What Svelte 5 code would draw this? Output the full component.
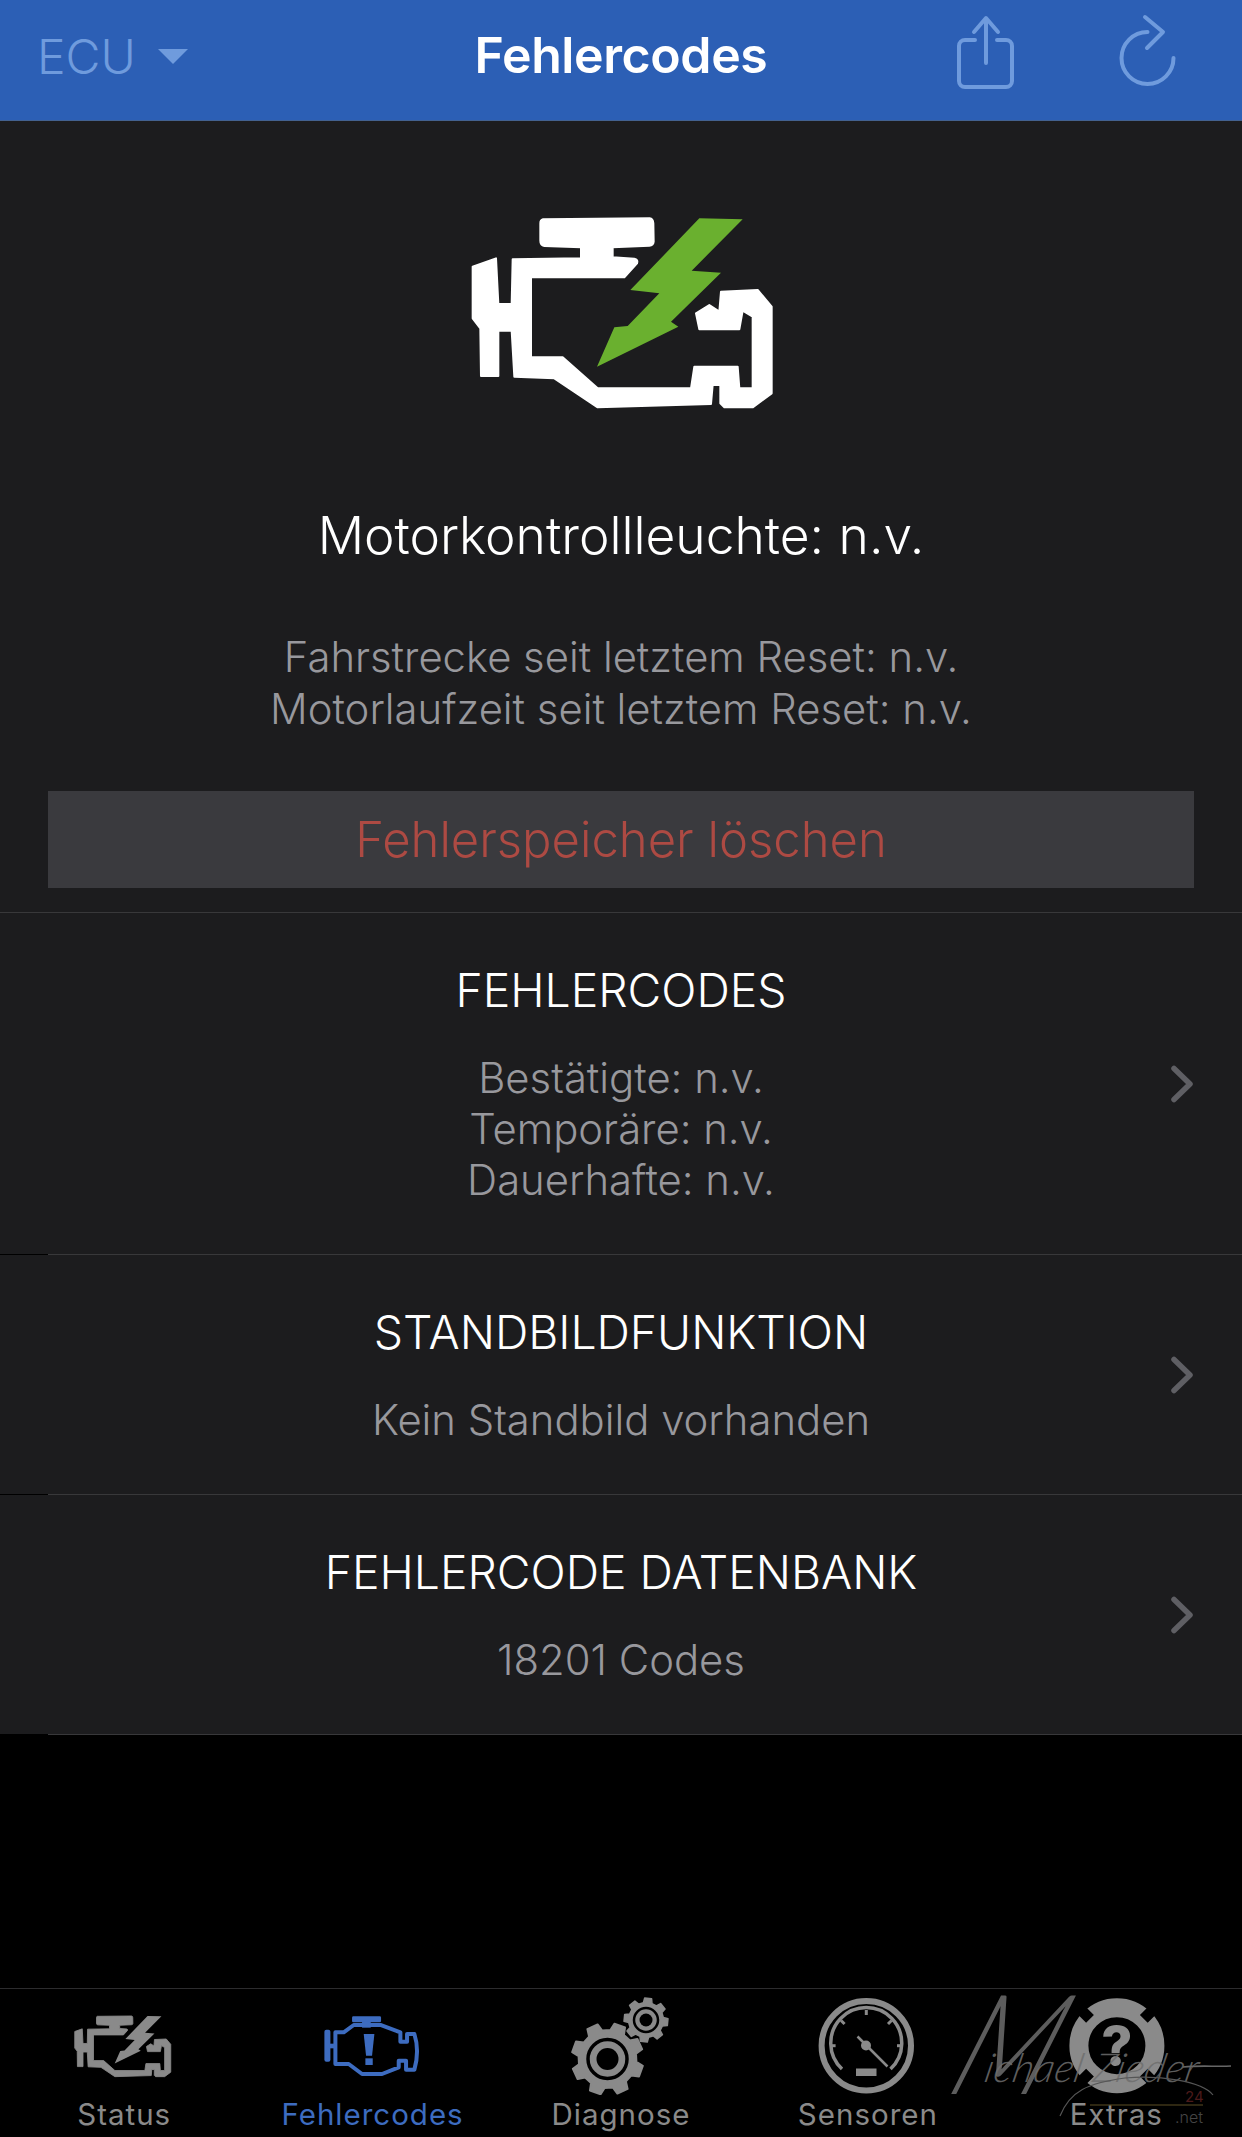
<script>
  const gray = '#8a8a8a'

  const rows = [
    { title: 'FEHLERCODES', lines: ['Bestätigte: n.v.', 'Temporäre: n.v.', 'Dauerhafte: n.v.'] },
    { title: 'STANDBILDFUNKTION', lines: ['Kein Standbild vorhanden'] },
    { title: 'FEHLERCODE DATENBANK', lines: ['18201 Codes'] }
  ]

  const ENGINE =
    'M306 58 L626 55 Q636 56 637 70 L638 125 Q637 136 625 137 L515 142 L515 172 L580 176 Q592 178 588 190 L550 232 L270 232 L270 472 L365 472 L470 565 L750 565 L760 500 L890 500 L895 565 L935 565 L935 350 L905 332 L895 388 L775 388 L765 340 L805 315 L835 335 L840 275 L950 270 L992 320 L992 580 L935 622 L850 622 L838 610 L838 555 L815 555 L810 612 L470 622 L340 535 L220 530 L212 392 L172 392 L172 528 L120 528 L118 385 L95 355 L95 200 L165 175 L172 312 L212 312 L215 178 L420 175 L420 142 L310 138 Q298 136 298 122 L298 70 Q298 60 306 58 Z'
  const BOLT =
    'M775 55 L905 58 L752 212 L840 218 L690 365 L712 380 L468 500 L520 382 L560 378 L655 280 L568 270 Z'

  // cog outline with trapezoid teeth
  function gear(cx, cy, ro, ri, n, rot) {
    const step = (Math.PI * 2) / n
    let d = ''
    for (let i = 0; i < n; i++) {
      const a = rot + i * step
      const pts = [
        [ri, a - step * 0.32],
        [ro, a - step * 0.2],
        [ro, a + step * 0.2],
        [ri, a + step * 0.32]
      ]
      for (const [r, t] of pts) {
        d += (d ? 'L' : 'M') + (cx + r * Math.cos(t)).toFixed(1) + ' ' + (cy + r * Math.sin(t)).toFixed(1)
      }
    }
    return d + 'Z'
  }

  const ticks = [-180, -135, -90, -45, 0]
</script>

<div class="page">
  <header>
    <div class="ecu">ECU <span class="caret"></span></div>
    <h1>Fehlercodes</h1>
    <div class="actions">
      <svg width="60" height="80" viewBox="0 0 60 80" fill="none" stroke="#6f9bdd" stroke-width="4" stroke-linecap="round" stroke-linejoin="round">
        <path d="M31 50V6M19 19L31 5L43 19" />
        <path d="M20 27H10a6 6 0 0 0-6 6V68a6 6 0 0 0 6 6H51a6 6 0 0 0 6-6V33a6 6 0 0 0-6-6H42" />
      </svg>
      <svg width="60" height="80" viewBox="0 0 60 80" fill="none" stroke="#6f9bdd" stroke-width="4" stroke-linecap="round" stroke-linejoin="round">
        <path d="M29.5 19A26 26 0 1 0 55.5 45" />
        <path d="M27 4L45 19L29 35" />
      </svg>
    </div>
  </header>

  <main>
    <section class="hero">
      <svg class="engine" width="360" height="220" viewBox="0 0 1080 660">
        <path d={ENGINE} fill="#fff" stroke="#fff" stroke-width="6" stroke-linejoin="round" />
        <path d={BOLT} fill="#6ab02f" stroke="#1c1c1e" stroke-width="3" paint-order="stroke" />
      </svg>
      <p class="status">Motorkontrollleuchte: n.v.</p>
      <p class="info">Fahrstrecke seit letztem Reset: n.v.<br />Motorlaufzeit seit letztem Reset: n.v.</p>
      <button type="button" class="clear">Fehlerspeicher löschen</button>
    </section>

    <div class="sep full"></div>
    {#each rows as row}
      <div class="row">
        <div></div>
        <div class="text">
          <h2>{row.title}</h2>
          {#each row.lines as line}
            <p>{line}</p>
          {/each}
        </div>
        <svg class="chev" width="24" height="38" viewBox="0 0 24 38" fill="none" stroke="#5f5f64" stroke-width="5.5" stroke-linecap="round" stroke-linejoin="round">
          <path d="M4 3.5L20 19L4 34.5" />
        </svg>
      </div>
      <div class="sep"></div>
    {/each}
  </main>

  <nav>
    <div class="tab">
      <svg viewBox="0 0 120 106">
        <g transform="translate(0.6 21.1) scale(.107)">
          <path d={ENGINE} fill={gray} stroke={gray} stroke-width="8" stroke-linejoin="round" />
          <path d={BOLT} fill={gray} stroke="#000" stroke-width="26" paint-order="stroke" />
        </g>
      </svg>
      <span>Status</span>
    </div>

    <div class="tab active">
      <svg viewBox="0 0 120 106">
        <g transform="translate(-52.6 10) scale(.3333)" fill="#3d6cc0">
          <rect x="275" y="52" width="87" height="18" rx="4" />
          <rect x="305" y="68" width="26" height="18" />
          <rect x="192" y="92" width="18" height="96" rx="6" />
          <rect x="208" y="134" width="20" height="14" />
          <path d="M225 100H250L280 78H360L420 100V128H440V105H462Q478 155 462 212H437V185H415V205L365 225H305L265 195H225Z" fill="none" stroke="#3d6cc0" stroke-width="12" stroke-linejoin="round" />
          <path d="M310 105H342L335 170H317Z" />
          <rect x="315" y="178" width="22" height="20" />
        </g>
      </svg>
      <span>Fehlercodes</span>
    </div>

    <div class="tab">
      <svg viewBox="0 0 120 106">
        <path d={gear(46.5, 70, 36, 29, 8, 0.35)} fill={gray} stroke={gray} stroke-width="2" stroke-linejoin="round" />
        <circle cx="46.5" cy="70" r="19.5" fill="none" stroke="#000" stroke-width="3.5" />
        <circle cx="46.5" cy="70" r="11" fill="#000" />
        <path d={gear(85, 31, 22, 17.5, 8, 0.1)} fill={gray} stroke={gray} stroke-width="1.5" stroke-linejoin="round" />
        <circle cx="85" cy="31" r="12" fill="none" stroke="#000" stroke-width="2.5" />
        <circle cx="85" cy="31" r="6.5" fill="#000" />
      </svg>
      <span>Diagnose</span>
    </div>

    <div class="tab">
      <svg viewBox="0 0 120 106">
        <circle cx="57.3" cy="56.7" r="44.7" fill="none" stroke={gray} stroke-width="6" />
        <path d="M33 81A35.5 35.5 0 1 1 81.5 81" fill="none" stroke={gray} stroke-width="3.5" transform="translate(0 -1)" />
        {#each ticks as t}
          <line x1="57.3" y1="21" x2="57.3" y2="26" stroke={gray} stroke-width="3" transform="rotate({t + 90} 57.3 56.7)" />
        {/each}
        <path d="M48.5 47.5L78.5 77.5" stroke={gray} stroke-width="2.5" />
        <circle cx="57" cy="56.5" r="5" fill={gray} />
        <rect x="47" y="79.5" width="20.5" height="7.5" fill={gray} />
      </svg>
      <span>Sensoren</span>
    </div>

    <div class="tab">
      <svg viewBox="0 0 120 106">
        <circle cx="58.9" cy="56.7" r="38" fill="none" stroke={gray} stroke-width="19" />
        <path d="M22 19.8L32 29.8M95.8 19.8L85.8 29.8M22 93.6L32 83.6M95.8 93.6L85.8 83.6" stroke="#000" stroke-width="11" />
        <text x="58.9" y="76" text-anchor="middle" class="qm" fill={gray}>?</text>
      </svg>
      <span>Extras</span>
    </div>

    <div class="mark">
      <span class="big">M</span>
      <span class="name">ichael Zieder</span>
      <span class="n24">24</span>
      <span class="net">.net</span>
      <svg width="302" height="137" viewBox="0 0 302 137" fill="none">
        <path d="M243 68C262 66 276 68 291 67" stroke="#666" stroke-width="1.6" />
        <path d="M120 117C130 92 148 84 185 79C220 76 262 82 273 96" stroke="#555" stroke-width="1.2" />
        <path d="M150 106H263" stroke="#5c4f24" stroke-width="1" />
      </svg>
    </div>
  </nav>
</div>

<style>
  :global(body) {
    margin: 0;
    background: #000;
  }
  .page {
    width: 1242px;
    height: 2137px;
    display: flex;
    flex-direction: column;
    font-family: Inter, "Liberation Sans", sans-serif;
    overflow: hidden;
  }
  header {
    height: 120px;
    border-bottom: 1px solid #43618f;
    background: #2c5fb5;
    display: grid;
    grid-template-columns: 1fr auto 1fr;
    align-items: center;
  }
  .ecu {
    padding-left: 37px;
    font-size: 48px;
    font-weight: 300;
    color: #6f9bdd;
    display: flex;
    align-items: center;
    gap: 22px;
    margin-top: -8px;
  }
  .caret {
    width: 0;
    height: 0;
    border-left: 15px solid transparent;
    border-right: 15px solid transparent;
    border-top: 15px solid #6f9bdd;
    margin-top: 1px;
  }
  h1 {
    margin: -10px 0 0;
    font-size: 50px;
    font-weight: 600;
    color: #fff;
    letter-spacing: -0.4px;
  }
  .actions {
    display: flex;
    justify-content: flex-end;
    gap: 103px;
    padding-right: 64px;
    align-self: start;
    margin-top: 13px;
  }
  main {
    background: #1c1c1e;
  }
  .hero {
    padding-top: 79px;
    display: flex;
    flex-direction: column;
    align-items: center;
    text-align: center;
  }
  .engine {
    display: block;
  }
  .status {
    margin: 85px 0 0;
    font-size: 51.5px;
    line-height: 60px;
    font-weight: 300;
    color: #fff;
  }
  .info {
    margin: 67px 0 0;
    font-size: 41.8px;
    line-height: 51.5px;
    font-weight: 300;
    color: #98989d;
  }
  .clear {
    width: 1146px;
    height: 97px;
    margin: 56px 0 24px;
    border: 0;
    padding: 0;
    background: #3a3a3e;
    color: #ad4a43;
    font: 300 49px Inter, "Liberation Sans", sans-serif;
  }
  .sep {
    height: 1px;
    background: linear-gradient(to right, #000 48px, #38383a 48px);
  }
  .sep.full {
    background: #38383a;
  }
  .row {
    display: grid;
    grid-template-columns: 1fr auto 1fr;
    align-items: center;
  }
  .text {
    padding: 52px 0 48px;
    text-align: center;
  }
  h2 {
    margin: 0 0 38px;
    font-size: 46.3px;
    line-height: 50px;
    font-weight: 300;
    color: #fff;
  }
  .text p {
    margin: 0;
    font-size: 41.8px;
    line-height: 51px;
    font-weight: 300;
    color: #98989d;
  }
  .chev {
    justify-self: end;
    margin-right: 48px;
  }
  nav {
    margin-top: auto;
    height: 148px;
    border-top: 1px solid #2c2c2e;
    display: grid;
    grid-template-columns: repeat(5, 1fr);
    position: relative;
  }
  .tab {
    display: flex;
    flex-direction: column;
    align-items: center;
    color: #8a8a8a;
  }
  .tab svg {
    width: 120px;
    height: 106px;
    display: block;
  }
  .tab span {
    margin-top: 1px;
    font-size: 29.5px;
    line-height: 36px;
    letter-spacing: 1px;
  }
  .tab:nth-child(n+4) span {
    margin-left: -3px;
  }
  .tab.active {
    color: #3d6cc0;
  }
  .qm {
    font: 800 54px Inter, "Liberation Sans", sans-serif;
  }
  .mark {
    position: absolute;
    left: 940px;
    top: 10px;
    width: 302px;
    height: 137px;
    pointer-events: none;
    color: #6e6e6e;
  }
  .mark svg {
    position: absolute;
    left: 0;
    top: 0;
  }
  .big,
  .name,
  .n24,
  .net {
    position: absolute;
    white-space: nowrap;
  }
  .big {
    left: -8px;
    top: -14px;
    font: italic 300 116px Lato, sans-serif;
    transform: skewX(-22deg) scaleY(1.2);
    transform-origin: left bottom;
    opacity: .85;
  }
  .name {
    left: 46px;
    top: 44px;
    font: italic 300 40px Lato, sans-serif;
    transform: skewX(-12deg);
    letter-spacing: 0.6px;
    opacity: .85;
  }
  .n24 {
    left: 245px;
    top: 88px;
    font: 400 15px Inter, sans-serif;
    color: #4c1a1a;
  }
  .net {
    left: 235px;
    top: 108px;
    font: 300 16px Inter, sans-serif;
    color: #444;
  }
</style>
